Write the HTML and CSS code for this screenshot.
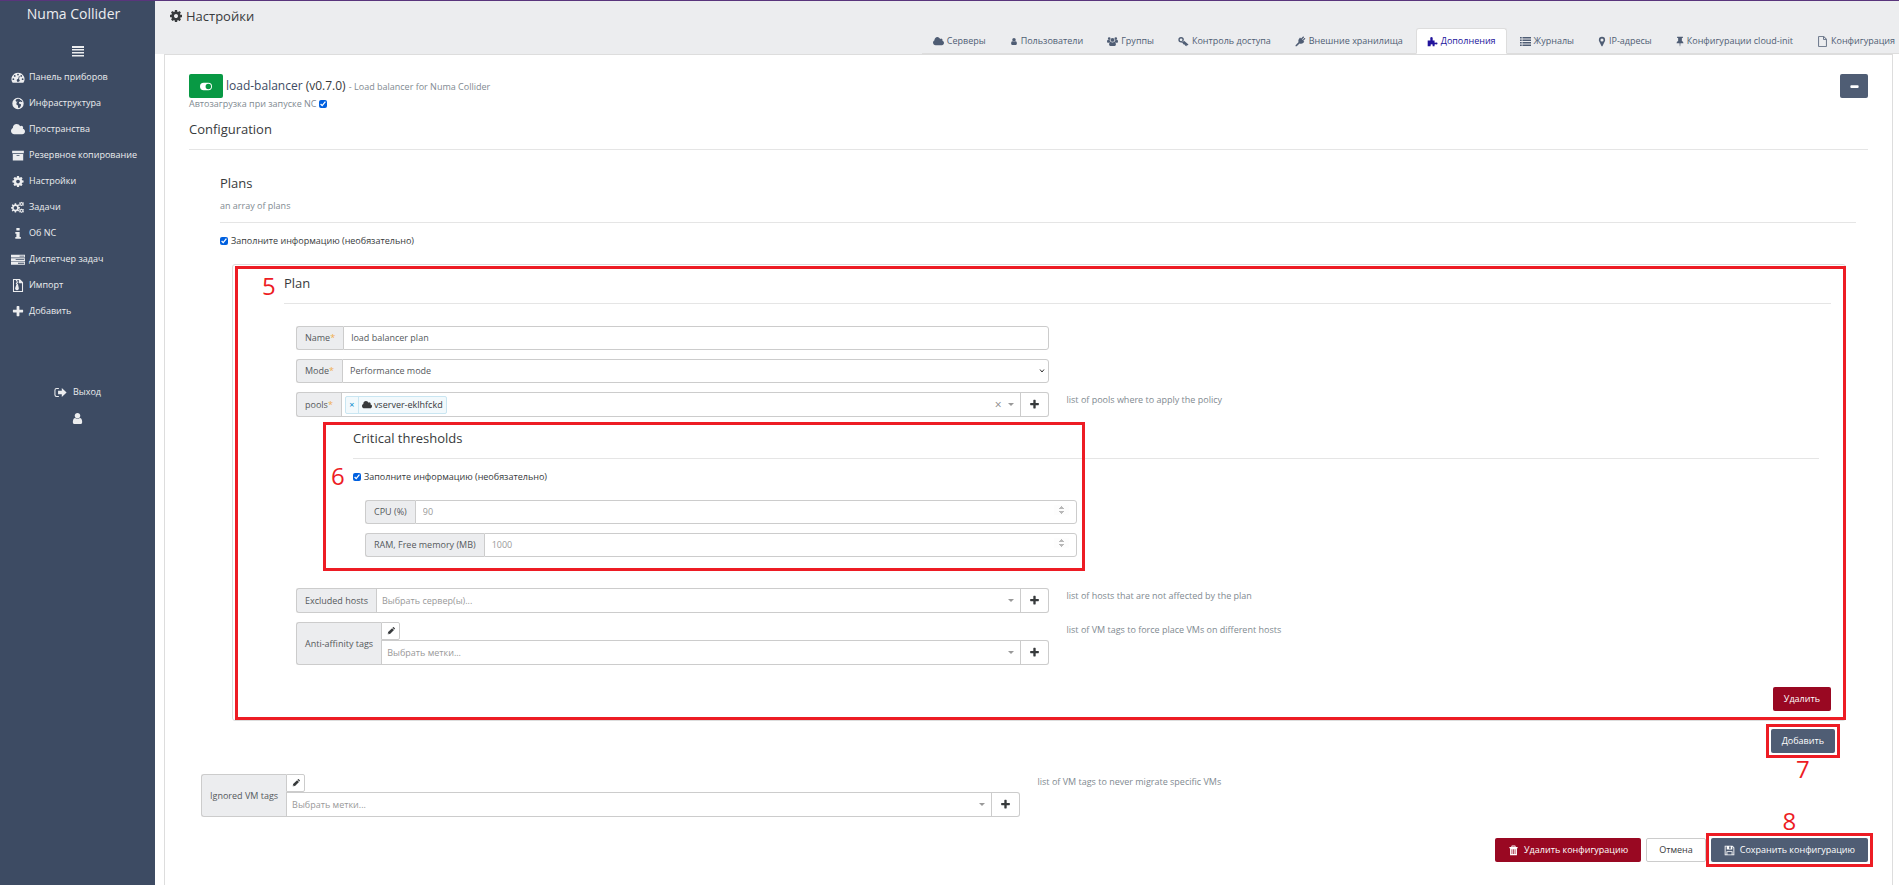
FILE: index.html
```html
<!DOCTYPE html>
<html lang="ru">
<head>
<meta charset="utf-8">
<title>Numa Collider – Настройки</title>
<link rel="stylesheet" href="styles.css">
</head>
<body>
<svg class="sprite" aria-hidden="true">
  <symbol id="i-cog" viewBox="0 0 1792 1792"><path d="M1152 896q0-106-75-181t-181-75-181 75-75 181 75 181 181 75 181-75 75-181zm512-109v222q0 12-8 23t-20 13l-185 28q-19 54-39 91 35 50 107 138 10 12 10 25t-9 23q-27 37-99 108t-94 71q-12 0-26-9l-138-108q-44 23-91 38-16 136-29 186-7 28-36 28h-222q-14 0-24.500-8.500t-11.500-21.500l-28-184q-49-16-90-37l-141 107q-10 9-25 9-14 0-25-11-126-114-165-168-7-10-7-23 0-12 8-23 15-21 51-66.500t54-70.500q-27-50-41-99l-183-27q-13-2-21-12.500t-8-23.500v-222q0-12 8-23t19-13l186-28q14-46 39-92-40-57-107-138-10-12-10-24 0-10 9-23 26-36 98.500-107.500t94.500-71.500q13 0 26 10l138 107q44-23 91-38 16-136 29-186 7-28 36-28h222q14 0 24.500 8.500t11.500 21.500l28 184q49 16 90 37l142-107q9-9 24-9 13 0 25 10 129 119 165 170 7 8 7 22 0 12-8 23-15 21-51 66.500t-54 70.500q26 50 41 98l183 28q13 2 21 12.500t8 23.500z"/></symbol>
  <symbol id="i-cloud" viewBox="64 60 1920 1664"><path d="M1984 1152q0 159-112.500 271.500t-271.500 112.500h-1088q-185 0-316.500-131.500t-131.500-316.500q0-132 71-241.500t187-163.500q-2-28-2-43 0-212 150-362t362-150q158 0 286.500 88t187.500 230q70-62 166-62 106 0 181 75t75 181q0 75-41 138 129 30 213 134.500t84 239.500z"/></symbol>
  <symbol id="i-user" viewBox="0 0 1792 1792"><path d="M1536 1399q0 109-62.500 187t-150.500 78h-854q-88 0-150.500-78t-62.500-187q0-85 8.500-160.500t31.500-152 58.500-131 94-89 134.500-34.500q131 128 313 128t313-128q76 0 134.500 34.500t94 89 58.500 131 31.500 152 8.500 160.500zm-256-887q0 159-112.500 271.500t-271.500 112.500-271.500-112.500-112.500-271.500 112.500-271.500 271.500-112.500 271.500 112.500 112.500 271.500z"/></symbol>
  <symbol id="i-plus" viewBox="0 0 1792 1792"><path d="M1600 736v192q0 40-28 68t-68 28h-416v416q0 40-28 68t-68 28h-192q-40 0-68-28t-28-68v-416h-416q-40 0-68-28t-28-68v-192q0-40 28-68t68-28h416v-416q0-40 28-68t68-28h192q40 0 68 28t28 68v416h416q40 0 68 28t28 68z"/></symbol>
  <symbol id="i-menu" viewBox="0 0 12 12"><path d="M0 1h12v2H0zM0 4h12v1.500H0zM0 7h12v1.500H0zM0 10h12v1.500H0z"/></symbol>
  <symbol id="i-gauge" viewBox="0 0 16 16"><path fill-rule="evenodd" d="M8 2a8 8 0 0 0-6.800 12.200q.2.300.6.300h12.400q.4 0 .6-.3A8 8 0 0 0 8 2zM2.300 8.900a1.100 1.100 0 1 1 0 2.200 1.100 1.100 0 0 1 0-2.200zM4 5a1.100 1.100 0 1 1 0 2.200A1.100 1.100 0 0 1 4 5zm4-1.700a1.100 1.100 0 1 1 0 2.200 1.100 1.100 0 0 1 0-2.200zM12 5a1.100 1.100 0 1 1 0 2.200A1.100 1.100 0 0 1 12 5zm1.700 3.900a1.100 1.100 0 1 1 0 2.200 1.100 1.100 0 0 1 0-2.200zM9.200 6.300l.9.300-.9 3.600a1.700 1.700 0 1 1-1-.3z"/></symbol>
  <symbol id="i-globe" viewBox="0 0 16 16"><path fill-rule="evenodd" d="M8 1a7 7 0 1 0 0 14A7 7 0 0 0 8 1zM6.400 2.500 8.700 2l2 .7-.6 1.100 1.600-.2 1.900 2.600-1.500.1-1.400-.9-1.600 1.200.5 1.700 2.100.5-.2 2.200-1.800 2.600-1.300-.1-.7-3.300-1.700-1 .2-2.200 1.400-1.400-1.800.1-.9-1.300z"/></symbol>
  <symbol id="i-archive" viewBox="0 0 16 16"><path fill-rule="evenodd" d="M.8 2.200h14.400v3H.8zM1.600 6h12.800v8.300H1.600zm4.600 1.300v1h3.600v-1z"/></symbol>
  <symbol id="i-cogs" viewBox="0 0 18 16"><path fill-rule="evenodd" d="M4.800 2.600h1.800l.3 1.700 1 .4 1.400-1 1.200 1.200-1 1.400.4 1 1.700.3v1.800l-1.700.3-.4 1 1 1.400-1.200 1.200-1.400-1-1 .4-.3 1.700H4.800l-.3-1.700-1-.4-1.400 1-1.200-1.200 1-1.400-.4-1L0 9.400V7.600l1.500-.3.4-1-1-1.400 1.200-1.200 1.400 1 1-.4zM5.700 6.200a2.300 2.300 0 1 0 0 4.600 2.300 2.300 0 0 0 0-4.600zM13.500.7l1 .9 1.400-.4.7 1.100-.7 1.200.7 1.200-.7 1.100-1.400-.3-1 .9-1-.9-1.400.3-.7-1.100.7-1.200-.7-1.200.7-1.100 1.400.4zm0 1.700a1.100 1.100 0 1 0 0 2.200 1.100 1.100 0 0 0 0-2.200zM13.500 9.400l1 .9 1.400-.4.7 1.100-.7 1.200.7 1.200-.7 1.100-1.400-.3-1 .9-1-.9-1.400.3-.7-1.100.7-1.200-.7-1.200.7-1.100 1.400.4zm0 1.700a1.100 1.100 0 1 0 0 2.200 1.100 1.100 0 0 0 0-2.200z"/></symbol>
  <symbol id="i-info" viewBox="0 0 16 16"><path d="M6 1.200h4v3H6zM4.700 6H10v6.300h1.500v2.300H4.700v-2.300H6v-4H4.700z"/></symbol>
  <symbol id="i-server" viewBox="0 0 18 16"><path fill-rule="evenodd" d="M0 1.800h18v3.700H0zm11 1.300v1.100h6V3.100zM0 6.400h18v3.700H0zm6 1.300v1.100h11V7.700zM0 11h18v3.700H0zm9 1.300v1.100h8v-1.100z"/></symbol>
  <symbol id="i-import" viewBox="0 0 16 16"><path fill-rule="evenodd" d="M1.800 0h8.400l4 4v12H1.800zm1.300 1.300v13.400h9.800V5.200H9V1.300zM5.400 1.300h1.800v1.500H5.400zM6.300 3h1.800v1.500H6.300zM5.400 4.600h1.800v1.500H5.400zM6.300 6.200h1.600l1 4.500a2.300 2.300 0 1 1-4.300 0z"/></symbol>
  <symbol id="i-logout" viewBox="0 0 16 16"><path fill-rule="evenodd" d="M6 2.500v1.300H3.200q-1.400 0-1.400 1.400v5.600q0 1.400 1.400 1.400H6v1.300H3.200Q.5 13.500.5 10.800V5.200q0-2.700 2.700-2.700zM9.600 2.500 15.500 8l-5.900 5.500v-3.200H5V5.700h4.600z"/></symbol>
  <symbol id="i-toggle" viewBox="0 0 18 16"><path fill-rule="evenodd" d="M5.500 2.500h7a5.500 5.500 0 0 1 0 11h-7a5.500 5.500 0 0 1 0-11zm7 1.400a4.100 4.100 0 1 0 0 8.200 4.100 4.100 0 0 0 0-8.200z"/></symbol>
  <symbol id="i-minus" viewBox="0 0 12 12"><path d="M2.500 4.500h7q1 0 1 1v1q0 1-1 1h-7q-1 0-1-1v-1q0-1 1-1z"/></symbol>
  <symbol id="i-users" viewBox="0 0 18 16"><path d="M3.600 1a2.200 2.200 0 1 1 0 4.400 2.200 2.200 0 0 1 0-4.400zM14.400 1a2.200 2.200 0 1 1 0 4.400 2.200 2.200 0 0 1 0-4.400zM9 2.200a3.200 3.200 0 1 1 0 6.400 3.200 3.200 0 0 1 0-6.400zM0 8.600q0-3.300 1.500-3.300 2 1.300 3.500.5-.2 1.700.8 2.900-2 .1-2.900 1.300H1.500Q0 10 0 8.600zM18 8.600q0-3.300-1.500-3.300-2 1.300-3.500.5.200 1.700-.8 2.900 2 .1 2.900 1.300h1.400Q18 10 18 8.600zM3.400 13q0-4.500 2.400-4.500 3.200 2.300 6.400 0 2.400 0 2.400 4.500 0 2.200-2 2.200H5.400q-2 0-2-2.200z"/></symbol>
  <symbol id="i-key" viewBox="0 0 16 16"><path fill-rule="evenodd" d="M4.500 1.500a4 4 0 1 1 0 8 4 4 0 0 1 0-8zm0 2a2 2 0 1 0 0 4 2 2 0 0 0 0-4zM8 6.300l7.200 6.200-1 1.300-1.400-.9-.3 1.900-1.900-.5-.4-2-1.500.6-2.800-3.400z"/></symbol>
  <symbol id="i-plug" viewBox="0 0 16 16"><path d="M14.800 4.200 12 7l1.500 1.500-.9.900q-2.800 2.900-6 1.500L2.500 15H.8v-1.700l4.200-4.200q-1.400-3.100 1.500-6l.8-.8L8.800 3.800l2.900-2.900q1.600-.5 1.400 1.300l-2.700 2.700.7.800 2.600-2.700q1.700-.3 1.100 1.200z"/></symbol>
  <symbol id="i-puzzle" viewBox="0 0 16 16"><path d="M1 6.500h3.800q.5-.6-.1-1.800Q4.200 1.500 6.500 1.500t1.900 3.200q-.6 1.300 0 1.800H11v2.800q.6.700 1.900.2 2.400-.5 2.400 1.300t-2.400 1.300Q11.600 11.700 11 12.300V15H8.300q-.5-.5 0-1.500.4-1.500-1.500-1.500t-1.600 1.500q.5 1 0 1.500H1z"/></symbol>
  <symbol id="i-list" viewBox="0 0 16 16"><path d="M0 1.500h2.500v2.300H0zM3.600 1.500H16v2.300H3.600zM0 5.100h2.500v2.300H0zM3.600 5.100H16v2.300H3.600zM0 8.700h2.500V11H0zM3.600 8.700H16V11H3.600zM0 12.300h2.500v2.300H0zM3.600 12.300H16v2.300H3.600z"/></symbol>
  <symbol id="i-pin" viewBox="2 0 12 16"><path fill-rule="evenodd" d="M8 1a4.700 4.700 0 0 1 4.700 4.700q0 1-.4 1.900L8.800 14.900q-.8.900-1.600 0L3.700 7.600q-.4-.9-.4-1.900A4.700 4.700 0 0 1 8 1zm0 2.400A2.300 2.300 0 1 0 8 8a2.300 2.300 0 0 0 0-4.600z"/></symbol>
  <symbol id="i-tack" viewBox="2 0 12 16"><path d="M3.700 1h8.600v1.800h-1.500v4.600q2.200 1 2.400 3.100H8.700L8.300 15h-.6l-.4-4.500H2.800q.2-2.100 2.400-3.100V2.800H3.700z"/></symbol>
  <symbol id="i-file" viewBox="0 0 16 16"><path fill-rule="evenodd" d="M1.800.3h8.400l4 4v11.400H1.800zm1.200 1.200v13h10v-9H9v-4zm7.200.3v2.500h2.500z"/></symbol>
  <symbol id="i-pencil" viewBox="0 0 16 16"><path fill-rule="evenodd" d="M10.200 2.300 14 6.100l-8 8-4.500.6.700-4.500zM11 1.500l1-1q.8-.6 1.600 0l2 2q.7.800 0 1.700l-1 1zM3 11.500l-.3 1.200.9.900 1.200-.3z"/></symbol>
  <symbol id="i-trash" viewBox="0 0 16 16"><path fill-rule="evenodd" d="M5.500.8h5L11.300 3H14v1.700h-1V15H3V4.700H2V3h2.700zm.8 1.300L6 3h4l-.3-.9zM5.200 6v7h1V6zm2.300 0v7h1V6zm2.300 0v7h1V6z"/></symbol>
  <symbol id="i-save" viewBox="0 0 16 16"><path fill-rule="evenodd" d="M1 1h11.500L15 3.500V15H1zm1.300 1.300v11.400h1.300V9h8.800v4.700h1.300V4.200l-1.600-1.900V6.500H4V2.300zM7.500 2.300v3h2.300v-3zM4.900 10.200v3.500h6.200v-3.500z"/></symbol>
</svg>

<div class="app">
  <nav class="sidebar">
    <a class="brand" href="#">Numa Collider</a>
    <button class="menu-toggle" type="button" aria-label="Меню"><svg class="icon"><use href="#i-menu"/></svg></button>
    <ul class="menu">
      <li><a href="#"><svg class="icon"><use href="#i-gauge"/></svg>Панель приборов</a></li>
      <li><a href="#"><svg class="icon"><use href="#i-globe"/></svg>Инфраструктура</a></li>
      <li><a href="#"><svg class="icon"><use href="#i-cloud"/></svg>Пространства</a></li>
      <li><a href="#"><svg class="icon"><use href="#i-archive"/></svg>Резервное копирование</a></li>
      <li><a href="#"><svg class="icon"><use href="#i-cog"/></svg>Настройки</a></li>
      <li><a href="#"><svg class="icon"><use href="#i-cogs"/></svg>Задачи</a></li>
      <li><a href="#"><svg class="icon"><use href="#i-info"/></svg>Об NC</a></li>
      <li><a href="#"><svg class="icon"><use href="#i-server"/></svg>Диспетчер задач</a></li>
      <li><a href="#"><svg class="icon"><use href="#i-import"/></svg>Импорт</a></li>
      <li><a href="#"><svg class="icon"><use href="#i-plus"/></svg>Добавить</a></li>
    </ul>
    <ul class="account">
      <li><a href="#"><svg class="icon"><use href="#i-logout"/></svg>Выход</a></li>
      <li><a href="#" aria-label="Профиль"><svg class="icon"><use href="#i-user"/></svg></a></li>
    </ul>
  </nav>

  <div class="page">
    <header class="header">
      <h1 class="title"><svg class="icon"><use href="#i-cog"/></svg>Настройки</h1>
      <nav class="tabs">
        <a class="tab" href="#"><svg class="icon"><use href="#i-cloud"/></svg>Серверы</a>
        <a class="tab" href="#"><svg class="icon narrow"><use href="#i-user"/></svg>Пользователи</a>
        <a class="tab" href="#"><svg class="icon"><use href="#i-users"/></svg>Группы</a>
        <a class="tab" href="#"><svg class="icon"><use href="#i-key"/></svg>Контроль доступа</a>
        <a class="tab" href="#"><svg class="icon"><use href="#i-plug"/></svg>Внешние хранилища</a>
        <a class="tab active" href="#"><svg class="icon"><use href="#i-puzzle"/></svg>Дополнения</a>
        <a class="tab" href="#"><svg class="icon"><use href="#i-list"/></svg>Журналы</a>
        <a class="tab" href="#"><svg class="icon narrow"><use href="#i-pin"/></svg>IP-адресы</a>
        <a class="tab" href="#"><svg class="icon narrow"><use href="#i-tack"/></svg>Конфигурации cloud-init</a>
        <a class="tab" href="#"><svg class="icon"><use href="#i-file"/></svg>Конфигурация</a>
      </nav>
    </header>

    <main class="card">
      <div class="plugin-head">
        <h2 class="plugin-name">
          <button class="btn success" type="button" aria-label="Выключить"><svg class="icon"><use href="#i-toggle"/></svg></button>
          <span><a href="#">load-balancer</a> (v0.7.0) <small>- Load balancer for Numa Collider</small></span>
        </h2>
        <button class="btn primary square" type="button" aria-label="Свернуть"><svg class="icon"><use href="#i-minus"/></svg></button>
      </div>
      <label class="check muted">Автозагрузка при запуске NC <input type="checkbox" checked></label>

      <form class="config">
        <h3 class="heading">Configuration</h3>

        <section class="plans">
          <h4 class="heading with-note">Plans</h4>
          <p class="note">an array of plans</p>
          <label class="check"><input type="checkbox" checked> Заполните информацию (необязательно)</label>

          <div class="plan">
            <span class="mark"></span>
            <span class="step step-5">5</span>
            <h5 class="heading">Plan</h5>
            <div class="fields">
              <div class="field">
                <div class="group">
                  <label class="addon" for="name">Name<i>*</i></label>
                  <input class="control" id="name" type="text" value="load balancer plan">
                </div>
              </div>
              <div class="field">
                <div class="group">
                  <label class="addon" for="mode">Mode<i>*</i></label>
                  <select class="control" id="mode"><option>Performance mode</option></select>
                </div>
              </div>
              <div class="field">
                <div class="group tall">
                  <label class="addon" for="pools">pools<i>*</i></label>
                  <div class="picker">
                    <span class="tag"><button type="button" aria-label="Убрать">×</button><span><svg class="icon"><use href="#i-cloud"/></svg>vserver-eklhfckd</span></span>
                    <input id="pools" type="text">
                    <button class="clear" type="button" aria-label="Очистить">×</button>
                    <span class="caret"></span>
                  </div>
                  <button class="add" type="button" aria-label="Выбрать"><svg class="icon"><use href="#i-plus"/></svg></button>
                </div>
                <p class="help">list of pools where to apply the policy</p>
              </div>
            </div>

            <section class="thresholds">
              <span class="mark"></span>
              <span class="step step-6">6</span>
              <h6 class="heading">Critical thresholds</h6>
              <label class="check"><input type="checkbox" checked> Заполните информацию (необязательно)</label>
              <div class="fields">
                <div class="field">
                  <div class="group">
                    <label class="addon" for="cpu">CPU (%)</label>
                    <input class="control" id="cpu" type="number" placeholder="90">
                  </div>
                </div>
                <div class="field">
                  <div class="group">
                    <label class="addon" for="ram">RAM, Free memory (MB)</label>
                    <input class="control" id="ram" type="number" placeholder="1000">
                  </div>
                </div>
              </div>
            </section>

            <div class="fields">
              <div class="field">
                <div class="group tall">
                  <label class="addon" for="hosts">Excluded hosts</label>
                  <div class="picker">
                    <input id="hosts" type="text" placeholder="Выбрать сервер(ы)...">
                    <span class="caret"></span>
                  </div>
                  <button class="add" type="button" aria-label="Выбрать"><svg class="icon"><use href="#i-plus"/></svg></button>
                </div>
                <p class="help">list of hosts that are not affected by the plan</p>
              </div>
              <div class="field">
                <div class="group">
                  <label class="addon" for="anti">Anti-affinity tags</label>
                  <div class="stack">
                    <button class="edit" type="button" aria-label="Изменить"><svg class="icon"><use href="#i-pencil"/></svg></button>
                    <div class="group tall">
                      <div class="picker">
                        <input id="anti" type="text" placeholder="Выбрать метки...">
                        <span class="caret"></span>
                      </div>
                      <button class="add" type="button" aria-label="Выбрать"><svg class="icon"><use href="#i-plus"/></svg></button>
                    </div>
                  </div>
                </div>
                <p class="help">list of VM tags to force place VMs on different hosts</p>
              </div>
            </div>
            <div class="plan-actions"><button class="btn danger" type="button">Удалить</button></div>
          </div>
          <div class="list-actions">
            <div class="marked">
              <span class="mark"></span>
              <span class="step step-7">7</span>
              <button class="btn primary" type="button">Добавить</button>
            </div>
          </div>
        </section>

        <div class="fields">
          <div class="field">
            <div class="group">
              <label class="addon" for="ignored">Ignored VM tags</label>
              <div class="stack">
                <button class="edit" type="button" aria-label="Изменить"><svg class="icon"><use href="#i-pencil"/></svg></button>
                <div class="group tall">
                  <div class="picker">
                    <input id="ignored" type="text" placeholder="Выбрать метки...">
                    <span class="caret"></span>
                  </div>
                  <button class="add" type="button" aria-label="Выбрать"><svg class="icon"><use href="#i-plus"/></svg></button>
                </div>
              </div>
            </div>
            <p class="help">list of VM tags to never migrate specific VMs</p>
          </div>
        </div>

        <div class="form-actions">
          <button class="btn danger" type="button"><svg class="icon"><use href="#i-trash"/></svg>Удалить конфигурацию</button>
          <button class="btn plain" type="button">Отмена</button>
          <div class="marked">
            <span class="mark"></span>
            <span class="step step-8">8</span>
            <button class="btn primary" type="submit"><svg class="icon"><use href="#i-save"/></svg>Сохранить конфигурацию</button>
          </div>
        </div>
      </form>
    </main>
  </div>
</div>
</body>
</html>
```
FILE: styles.css
```css
* { box-sizing: border-box; }

body {
  margin: 0;
  overflow: hidden;
  background: #fff;
  color: #373a3c;
  font: 9px/14px "Open Sans", "Noto Sans", sans-serif;
}

a { color: inherit; text-decoration: none; }
ul { margin: 0; padding: 0; list-style: none; }
p, h1, h2, h3, h4, h5, h6 { margin: 0; font-weight: 400; }
button, input, select { font: inherit; color: inherit; margin: 0; }
button { cursor: pointer; }

.sprite { position: absolute; width: 0; height: 0; }
.icon { width: 11px; height: 11px; fill: currentColor; flex: none; }
.icon.narrow { width: 8px; }

.app { display: flex; min-height: 100vh; border-top: 1px solid #59357c; }

/* Sidebar */
.sidebar {
  flex: none;
  width: 155px;
  background: #3d4b63;
  color: #ecedef;
  display: flex;
  flex-direction: column;
}
.brand { padding: 2px 8px 0 0; font-size: 14px; line-height: 22px; text-align: center; }
.menu-toggle {
  align-self: center;
  display: flex;
  margin: 20px 0 7px;
  padding: 0;
  border: 0;
  background: none;
}
.menu-toggle .icon { width: 12px; height: 12px; }
.menu a { display: flex; align-items: center; gap: 4px; height: 26px; padding-left: 11px; }
.menu .icon { width: 14px; height: 13px; }
.account { margin-top: 55px; }
.account a { display: flex; align-items: center; justify-content: center; gap: 6px; height: 26px; }
.account .icon { width: 13px; height: 13px; }

/* Header and tabs */
.page { flex: 1; min-width: 0; }
.header { height: 53px; background: #ecedef; display: flex; flex-direction: column; justify-content: space-between; }
.title { display: flex; align-items: center; gap: 3px; padding: 5px 14px 0; font-size: 13px; line-height: 20px; }
.title .icon { width: 14px; height: 14px; }
.tabs {
  align-self: flex-end;
  display: flex;
  gap: 2px;
  border-bottom: 1px solid #ddd;
  color: #4f5d74;
  white-space: nowrap;
}
.tab {
  display: flex;
  align-items: center;
  gap: 3px;
  height: 26px;
  margin-bottom: -1px;
  padding: 0 10px;
  border: 1px solid transparent;
  border-radius: 3px 3px 0 0;
}
.tab:last-child { padding-right: 3px; }
.tab.active { background: #fff; border-color: #ddd #ddd #fff; color: #21139c; }

/* Card */
.card {
  min-height: calc(100vh - 54px);
  margin: 0 6px 0 9px;
  padding: 19px 24px 0;
  border: 1px solid #ddd;
  border-bottom: 0;
}
.plugin-head { display: flex; justify-content: space-between; }
.plugin-name { display: flex; align-items: center; gap: 3px; font-size: 12px; line-height: 20px; }
.plugin-name a { color: #3d4b63; }
.plugin-name small { font-size: 9px; color: #818a91; }

.btn {
  display: inline-flex;
  align-items: center;
  justify-content: center;
  gap: 5px;
  height: 24px;
  padding: 0 10px;
  border: 1px solid transparent;
  border-radius: 2px;
  color: #fff;
}
.success { background: #089944; }
.success .icon { width: 12px; }
.primary { background: #4f5d74; }
.danger { background: #990822; }
.plain { background: #fff; border-color: #ccc; color: #373a3c; }
.square { width: 28px; padding: 0; }

.check { display: flex; align-items: center; gap: 3px; line-height: 12px; }
.check input { width: 8px; height: 8px; accent-color: #0060df; }
.muted, .note, .help { color: #818a91; }

.heading {
  font-size: 13px;
  line-height: 20px;
  padding-bottom: 10px;
  border-bottom: 1px solid #e5e5e5;
}
.with-note { padding: 0; border: 0; }
.note { padding: 6px 0 9px; border-bottom: 1px solid #e5e5e5; }

.config { padding-top: 9px; }
.plans { padding: 23px 12px 0 31px; }
.plans > .check { margin-top: 12px; }

.plan {
  position: relative;
  margin: 17px 10px 0 12px;
  padding: 8px 14px 9px 51px;
  border: 1px solid #ddd;
  border-radius: 3px;
}

.fields { display: grid; gap: 9px; padding: 0 12px; }
.heading + .fields { margin-top: 22px; }
.field { display: grid; grid-template-columns: 1fr 1fr; gap: 18px; align-items: start; }
.group { display: flex; min-height: 24px; }
.group.tall { min-height: 25px; }
.addon {
  display: flex;
  align-items: center;
  padding: 0 8px;
  background: #ecedef;
  border: 1px solid #ccc;
  border-right: 0;
  border-radius: 3px 0 0 3px;
  color: #55595c;
  white-space: nowrap;
}
.addon i { color: #f0ad4e; font-style: normal; }
.control {
  flex: 1;
  min-width: 0;
  padding: 0 7px;
  border: 1px solid #ccc;
  border-radius: 0 3px 3px 0;
  background: #fff;
  color: #55595c;
}
select.control {
  appearance: none;
  background: #fff url("data:image/svg+xml,%3Csvg xmlns='http://www.w3.org/2000/svg' viewBox='0 0 6 4'%3E%3Cpath d='M1 0.500 3 3 5 0.500' fill='none' stroke='%23333'/%3E%3C/svg%3E") no-repeat right 3px center / 6px 4px;
}
input::placeholder { color: #999; opacity: 1; }
input[type="number"]::-webkit-inner-spin-button { opacity: .6; height: 10px; }

.picker {
  flex: 1;
  min-width: 0;
  display: flex;
  align-items: center;
  padding: 0 6px 0 3px;
  border: 1px solid #ccc;
}
.picker input { flex: 1; min-width: 0; padding: 0 2px; border: 0; outline: 0; background: none; }
.tag { display: flex; background: #f2f9fc; border: 1px solid #c9e6f2; border-radius: 2px; }
.tag button {
  width: 13px;
  padding: 0;
  border: 0;
  border-right: 1px solid #c9e6f2;
  background: none;
  color: #08c;
  line-height: 16px;
}
.tag span { display: flex; align-items: center; gap: 2px; padding: 0 3px; line-height: 16px; }
.tag .icon { width: 10px; height: 10px; }
.clear { padding: 0; margin-right: 6px; border: 0; background: none; color: #888; font-size: 12px; }
.caret { border: 3px solid transparent; border-top-color: #999; border-bottom: 0; }
.add {
  flex: none;
  width: 28px;
  display: flex;
  align-items: center;
  justify-content: center;
  padding: 0;
  background: #fff;
  border: 1px solid #ccc;
  border-left-width: 0;
  border-radius: 0 3px 3px 0;
}
.add .icon { width: 11px; height: 11px; }
.stack { flex: 1; min-width: 0; }
.edit {
  display: flex;
  align-items: center;
  justify-content: center;
  width: 19px;
  height: 18px;
  padding: 0;
  background: #fff;
  border: 1px solid #ccc;
  border-radius: 0 2px 2px 0;
}
.edit .icon { width: 8px; height: 8px; }
.help { padding-top: 1px; }

.thresholds { position: relative; margin: 11px 12px 31px 69px; }
.thresholds .check { margin-top: 12px; }
.thresholds .fields { margin-top: 17px; }

.plan-actions, .list-actions, .form-actions { display: flex; justify-content: flex-end; }
.plan-actions { margin-top: 22px; }
.list-actions { margin: 8px 21px 21px 0; }
.form-actions { gap: 5px; margin-top: 21px; }
.form-actions .btn { padding: 0 12px; }
.marked { position: relative; display: flex; }
.marked .btn { flex: 1; }

/* Numbered callouts laid over the form */
.mark { position: absolute; inset: -5px; border: 3px solid #ed1c24; pointer-events: none; }
.plan > .mark { inset: 1px -1px 0 2px; }
.thresholds > .mark { inset: -6px auto -14px -30px; width: calc(50% + 29px); }
.step { position: absolute; color: #ed1c24; font-size: 24px; line-height: 24px; }
.step-5 { left: 29px; top: 9px; }
.step-6 { left: -22px; top: 36px; }
.step-7 { left: 0; right: 0; top: 28px; text-align: center; }
.step-8 { left: 0; right: 0; bottom: 29px; text-align: center; }
```
